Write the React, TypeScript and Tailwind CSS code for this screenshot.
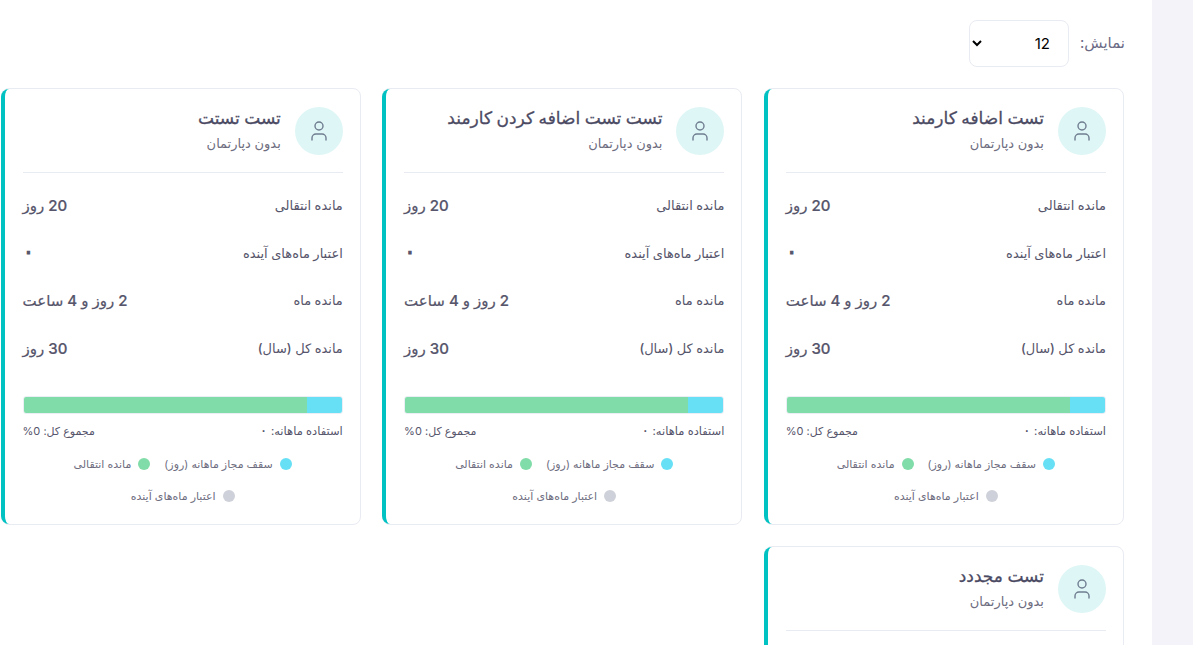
import { User } from "lucide-react";

const employees = [
  { name: "تست اضافه کارمند" },
  { name: "تست تست اضافه کردن کارمند" },
  { name: "تست تستت" },
  { name: "تست مجددد" },
];

const rows = [
  { label: "مانده انتقالی", value: "20 روز" },
  { label: "اعتبار ماه‌های آینده", value: "۰" },
  { label: "مانده ماه", value: "2 روز و 4 ساعت" },
  { label: "مانده کل (سال)", value: "30 روز" },
];

function EmployeeCard({ name }: { name: string }) {
  return (
    <div className="rounded-lg border border-[#e9ebf3] bg-white">
      <div className="-ml-px h-full rounded-l-lg border-l-4 border-[#00c2c2] pl-[18px] pr-[17px] pt-[18px] pb-5">
        <div className="flex gap-[14px] border-b border-[#e9ebf3] pb-[17px]">
          <div className="flex h-12 w-12 shrink-0 items-center justify-center rounded-full bg-[#def6f6]">
            <User size={24} strokeWidth={1.4} className="text-[#6f7d90]" />
          </div>
          <div>
            <div className="text-[17px] font-medium leading-[22px] text-[#4b4a63] [-webkit-text-stroke:0.3px_#4b4a63]">{name}</div>
            <div className="mt-[4px] text-[13px] leading-5 text-[#6e6d80]">بدون دپارتمان</div>
          </div>
        </div>

        <div className="mt-[9px]">
          {rows.map((r) => (
            <div key={r.label} className="flex h-[47.7px] items-center justify-between">
              <span className="text-[13px] font-medium text-[#56556b]">{r.label}</span>
              {r.value === "۰" ? (
                <span className="mb-[6px] text-[22px] leading-none text-[#56556b] [-webkit-text-stroke:1px_#56556b]">{r.value}</span>
              ) : (
                <span className="text-[15px] font-medium text-[#56556b] [-webkit-text-stroke:0.2px_#56556b]">{r.value}</span>
              )}
            </div>
          ))}
        </div>

        <div className="mt-[23px] flex h-[18px] overflow-hidden rounded-[3px] border border-[#eceef5]">
          <div className="w-[11%] bg-[#67e0f5]" />
          <div className="flex-1 bg-[#80dca8]" />
        </div>

        <div className="mt-[9px] flex h-4 items-center justify-between text-[11px] leading-4 text-[#56556b]">
          <span className="text-[11.5px]">
            استفاده ماهانه: <span className="text-[15px] leading-none">۰</span>
          </span>
          <span>مجموع کل: 0%</span>
        </div>

        <div className="mt-[17px] flex flex-wrap justify-center gap-x-[14px] gap-y-[16px] text-[11px] leading-4 text-[#6e6d80]">
          <div className="flex items-center gap-[7px]">
            <span className="h-3 w-3 rounded-full bg-[#67e0f5]" />
            سقف مجاز ماهانه (روز)
          </div>
          <div className="flex items-center gap-[7px]">
            <span className="h-3 w-3 rounded-full bg-[#80dca8]" />
            مانده انتقالی
          </div>
          <div className="flex items-center gap-[7px]">
            <span className="h-3 w-3 rounded-full bg-[#cfd1da]" />
            اعتبار ماه‌های آینده
          </div>
        </div>
      </div>
    </div>
  );
}

export default function App() {
  return (
    <div dir="rtl" className="flex h-[645px] w-[1193px] overflow-hidden bg-white font-['Inter','DejaVu_Sans',sans-serif]">
      <div className="w-[41px] shrink-0 bg-[#f3f3f9]" />
      <div className="min-w-0 flex-1 pr-[28px]">
        <div className="-mr-px flex h-[88px] items-start gap-[11px] pt-[20px]">
          <span className="mt-[13px] text-[15px] leading-5 text-[#6b6a85]">نمایش:</span>
          <select className="h-[47px] w-[100px] rounded-lg border border-[#e9ebf3] bg-white pr-[14px] pl-3 text-[15px] text-black">
            <option>12</option>
          </select>
        </div>
        <div className="grid w-[1124px] grid-cols-[360.3px_360.3px_360.3px] gap-x-[21.3px] gap-y-[21px]">
          {employees.map((e) => (
            <EmployeeCard key={e.name} name={e.name} />
          ))}
        </div>
      </div>
    </div>
  );
}
